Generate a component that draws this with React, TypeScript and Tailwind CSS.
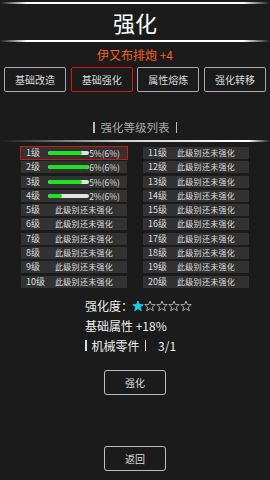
import React from "react";

const FONT = { fontFamily: '"Noto Sans CJK SC", "Noto Sans", sans-serif' };

type Row = { lv: number; p?: number; a?: string };

const left: Row[] = [
  { lv: 1, p: 83, a: "5%(6%)" },
  { lv: 2, p: 100, a: "6%(6%)" },
  { lv: 3, p: 83, a: "5%(6%)" },
  { lv: 4, p: 33, a: "2%(6%)" },
  { lv: 5 },
  { lv: 6 },
  { lv: 7 },
  { lv: 8 },
  { lv: 9 },
  { lv: 10 },
];
const right: Row[] = Array.from({ length: 10 }, (_, i) => ({ lv: 11 + i }));

function LevelRow({ r, hl }: { r: Row; hl?: boolean }) {
  return (
    <div className="relative h-[12px] w-[106px] bg-[#323232] flex items-center text-[9px] leading-[12px] text-[#dddddd] whitespace-nowrap">
      {hl && <div className="absolute -left-px -top-px -right-px -bottom-px border border-[#d01515]" />}
      <span className="w-[27px] pl-[5px] shrink-0">{r.lv}级</span>
      {r.p !== undefined ? (
        <>
          <div className="w-[41px] h-[4px] shrink-0 rounded-full bg-[#e2e2e2] overflow-hidden">
            <div className="h-full bg-[#22e022] rounded-full" style={{ width: `${r.p}%` }} />
          </div>
          <span className="ml-auto pr-[7px] shrink-0 text-[8.5px]">{r.a}</span>
        </>
      ) : (
        <span className="pl-[7px] text-[8px] tracking-[0.3px]">此级别还未强化</span>
      )}
    </div>
  );
}

function Star({ filled }: { filled?: boolean }) {
  return (
    <svg width="12" height="12" viewBox="0 0 24 24">
      <polygon
        points="12,2 14.9,9 22.5,9.3 16.6,14.1 18.6,21.5 12,17.3 5.4,21.5 7.4,14.1 1.5,9.3 9.1,9"
        fill={filled ? "#1ec8e8" : "none"}
        stroke={filled ? "#1ec8e8" : "#b5b5b5"}
        strokeWidth="1.8"
        strokeLinejoin="round"
      />
    </svg>
  );
}

function Tab({ label, active }: { label: string; active?: boolean }) {
  return (
    <div
      className={
        active
          ? "w-[62px] h-[25px] rounded-[2px] border-[1.5px] border-[#d81818] flex items-center justify-center text-[10px] text-[#dddddd]"
          : "w-[62px] h-[25px] rounded-[2px] border border-[#a8a8a8] flex items-center justify-center text-[10px] text-[#dddddd]"
      }
    >
      {label}
    </div>
  );
}

export default function App() {
  return (
    <div className="w-[270px] h-[480px] bg-[#1b1b1b] flex flex-col items-center overflow-hidden" style={FONT}>
      <div className="mt-[2px] h-[2px] w-full bg-[linear-gradient(90deg,transparent,#ffffff_10%,#ffffff_90%,transparent)]" />
      <div className="h-[36px] w-full flex items-center justify-center text-[22px] text-white leading-none">强化</div>
      <div className="h-[2px] w-full bg-[linear-gradient(90deg,transparent,#ffffff_10%,#ffffff_90%,transparent)]" />
      <div className="mt-[6px] h-[14px] leading-[14px] text-[12px] text-[#f2601e]">伊又布排炮 +4</div>
      <div className="mt-[5px] w-full px-[4px] flex justify-between">
        <Tab label="基础改造" />
        <Tab label="基础强化" active />
        <Tab label="属性熔炼" />
        <Tab label="强化转移" />
      </div>
      <div className="mt-[28px] h-[14px] leading-[14px] text-[11.5px] text-[#a8a8a8] flex items-center gap-[6px]">
        <span className="w-[1.5px] h-[11px] bg-[#bbbbbb]" />
        <span>强化等级列表</span>
        <span className="w-[1.5px] h-[11px] bg-[#bbbbbb]" />
      </div>
      <div className="mt-[6px] h-[2px] w-full bg-[linear-gradient(90deg,transparent,#cfcfcf_45%,#ffffff_92%,transparent)]" />
      <div className="mt-[5px] flex gap-[16px]">
        <div className="flex flex-col gap-[2.3px]">
          {left.map((r, i) => (
            <LevelRow key={r.lv} r={r} hl={i === 0} />
          ))}
        </div>
        <div className="flex flex-col gap-[2.3px]">
          {right.map((r) => (
            <LevelRow key={r.lv} r={r} />
          ))}
        </div>
      </div>
      <div className="w-full pl-[85px] mt-[10px] flex flex-col gap-[4px] text-[12px] leading-[16px] text-[#eeeeee]">
        <div className="flex items-center">
          <span>强化度：</span>
          <div className="flex ml-[-1px]">
            <Star filled />
            <Star />
            <Star />
            <Star />
            <Star />
          </div>
        </div>
        <div>基础属性 +18%</div>
        <div className="flex items-center">
          <span className="w-[1.5px] h-[11px] bg-[#dddddd]" />
          <span className="ml-[5px]">机械零件</span>
          <span className="ml-[5px] w-[1.5px] h-[11px] bg-[#dddddd]" />
          <span className="ml-[12px]">3/1</span>
        </div>
      </div>
      <div className="mt-[16px] w-[62px] h-[25px] rounded-[3px] border border-[#bdbdbd] flex items-center justify-center text-[10px] text-[#dddddd]">
        强化
      </div>
      <div className="mt-[51px] w-[62px] h-[25px] rounded-[3px] border border-[#bdbdbd] flex items-center justify-center text-[10px] text-[#dddddd]">
        返回
      </div>
    </div>
  );
}
